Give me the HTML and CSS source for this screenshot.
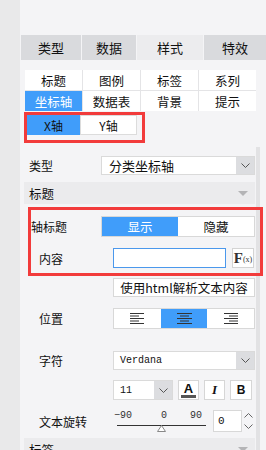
FILE: index.html
```html
<!DOCTYPE html>
<html lang="zh">
<head>
  <meta charset="UTF-8">
  <meta name="viewport" content="width=device-width, initial-scale=1.0">
  <title>样式设置</title>
  <link rel="stylesheet" href="styles.css">
</head>
<body>
  <div class="app">
    <div class="gutter"></div>
    <div class="panel">
      <div class="tabs">
        <div class="tab tab-w1">类型</div>
        <div class="tab tab-w2">数据</div>
        <div class="tab tab-w3 active">样式</div>
        <div class="tab tab-w4">特效</div>
      </div>

      <div class="subtabs">
        <div class="subtab">标题</div>
        <div class="subtab">图例</div>
        <div class="subtab">标签</div>
        <div class="subtab">系列</div>
        <div class="subtab active">坐标轴</div>
        <div class="subtab">数据表</div>
        <div class="subtab">背景</div>
        <div class="subtab">提示</div>
      </div>

      <div class="mark mark-axis">
        <div class="axis-switch">
          <div class="axis-btn axis-x active">X轴</div>
          <div class="axis-btn axis-y">Y轴</div>
        </div>
      </div>

      <div class="scroll">
        <div class="content">
          <div class="row row-type">
            <div class="label label-type">类型</div>
            <div class="select select-wide">
              <div class="select-value">分类坐标轴</div>
              <div class="select-arrow">
                <svg width="9" height="5" viewBox="0 0 9 5"><polyline points="0.5,0.5 4.5,4.5 8.5,0.5" fill="none" stroke="#555" stroke-width="1"/></svg>
              </div>
            </div>
          </div>

          <div class="section-head head-title">
            <span>标题</span>
            <span class="caret"></span>
          </div>

          <div class="mark mark-title">
            <div class="row row-show">
              <div class="label label-show">轴标题</div>
              <div class="toggle">
                <div class="toggle-item toggle-on">显示</div>
                <div class="toggle-item">隐藏</div>
              </div>
            </div>
            <div class="row row-content">
              <div class="label label-indent">内容</div>
              <div class="text-input"></div>
              <div class="fx-btn"><span class="fx-f">F</span><span class="fx-x">(x)</span></div>
            </div>
          </div>

          <div class="plain-btn html-btn">使用html解析文本内容</div>

          <div class="row row-align">
            <div class="label label-indent">位置</div>
            <div class="align-group">
              <div class="align-item">
                <svg width="15" height="11" viewBox="0 0 15 11"><g stroke="#333" stroke-width="1"><line x1="0" y1="0.5" x2="14" y2="0.5"/><line x1="0" y1="3" x2="9" y2="3"/><line x1="0" y1="5.5" x2="14" y2="5.5"/><line x1="0" y1="8" x2="9" y2="8"/><line x1="0" y1="10.5" x2="14" y2="10.5"/></g></svg>
              </div>
              <div class="align-item active">
                <svg width="15" height="11" viewBox="0 0 15 11"><g stroke="#333" stroke-width="1"><line x1="0" y1="0.5" x2="15" y2="0.5"/><line x1="3" y1="3" x2="12" y2="3"/><line x1="0" y1="5.5" x2="15" y2="5.5"/><line x1="3" y1="8" x2="12" y2="8"/><line x1="0" y1="10.5" x2="15" y2="10.5"/></g></svg>
              </div>
              <div class="align-item">
                <svg width="15" height="11" viewBox="0 0 15 11"><g stroke="#333" stroke-width="1"><line x1="1" y1="0.5" x2="15" y2="0.5"/><line x1="6" y1="3" x2="15" y2="3"/><line x1="1" y1="5.5" x2="15" y2="5.5"/><line x1="6" y1="8" x2="15" y2="8"/><line x1="1" y1="10.5" x2="15" y2="10.5"/></g></svg>
              </div>
            </div>
          </div>

          <div class="row row-font">
            <div class="label label-indent">字符</div>
            <div class="select select-font">
              <div class="select-value mono">Verdana</div>
              <div class="select-arrow">
                <svg width="9" height="5" viewBox="0 0 9 5"><polyline points="0.5,0.5 4.5,4.5 8.5,0.5" fill="none" stroke="#555" stroke-width="1"/></svg>
              </div>
            </div>
          </div>

          <div class="row row-size">
            <div class="select select-size">
              <div class="select-value mono">11</div>
              <div class="select-arrow">
                <svg width="9" height="5" viewBox="0 0 9 5"><polyline points="0.5,0.5 4.5,4.5 8.5,0.5" fill="none" stroke="#555" stroke-width="1"/></svg>
              </div>
            </div>
            <div class="icon-btn color-btn">
              <span class="color-a">A</span>
              <span class="color-bar"></span>
            </div>
            <div class="icon-btn italic-btn">I</div>
            <div class="icon-btn bold-btn">B</div>
          </div>

          <div class="row row-rotate">
            <div class="label label-indent">文本旋转</div>
            <div class="slider">
              <div class="scale">
                <span class="tick tick-min">−90</span>
                <span class="tick tick-mid">0</span>
                <span class="tick tick-max">90</span>
              </div>
              <div class="track"></div>
              <svg class="thumb" width="9" height="7" viewBox="0 0 9 7"><polygon points="4.5,0.5 8.5,6.5 0.5,6.5" fill="#fff" stroke="#888" stroke-width="1"/></svg>
            </div>
            <div class="number">
              <div class="number-value">0</div>
              <div class="spin">
                <svg width="9" height="5" viewBox="0 0 9 5"><polyline points="0.5,4.5 4.5,0.5 8.5,4.5" fill="none" stroke="#666" stroke-width="1"/></svg>
                <svg width="9" height="5" viewBox="0 0 9 5"><polyline points="0.5,0.5 4.5,4.5 8.5,0.5" fill="none" stroke="#666" stroke-width="1"/></svg>
              </div>
            </div>
          </div>

          <div class="section-head head-label">
            <span>标签</span>
            <span class="caret"></span>
          </div>
        </div>
        <div class="scrollbar"></div>
      </div>
    </div>
  </div>
</body>
</html>
```

FILE: styles.css
```css
body {
  margin: 0;
  font-family: "Noto Sans CJK SC", "Noto Sans", sans-serif;
  font-size: 12px;
  color: #111;
  background-color: #f4f4f6;
}
.app {
  display: flex;
  height: 450px;
  overflow: hidden;
}
.gutter {
  width: 20px;
  background-color: #e9e9ea;
}
.panel {
  flex: 1;
  display: flex;
  flex-direction: column;
  padding-top: 35px;
  background-color: #f4f4f6;
  min-width: 0;
}

/* top tabs */
.tabs {
  display: flex;
  gap: 1px;
  margin-left: 1px;
  height: 25px;
}
.tab {
  display: flex;
  align-items: center;
  justify-content: center;
  background-color: #d9dadd;
  font-size: 13px;
}
.tab.active {
  background-color: #ececee;
}
.tab-w1 { width: 60px; }
.tab-w2 { width: 54px; }
.tab-w3 { width: 66px; }
.tab-w4 { width: 62px; }

/* sub tabs */
.subtabs {
  display: grid;
  grid-template-columns: repeat(4, 57px);
  grid-auto-rows: 20px;
  gap: 1px;
  margin: 10px 0 0 5px;
  width: 231px;
  background-color: #e4e4e6;
}
.subtab {
  display: flex;
  align-items: center;
  justify-content: center;
  background-color: #fff;
  font-size: 12.5px;
}
.subtab.active {
  background-color: #409dfa;
  color: #fff;
}

/* red annotation frames */
.mark {
  border: 3px solid #f23b3b;
  box-sizing: border-box;
  position: relative;
}
.mark-axis {
  align-self: flex-start;
  margin: 1px 0 0 4px;
  padding: 0 5px 5px 0;
}
.axis-switch {
  display: flex;
}
.axis-btn {
  height: 20px;
  display: flex;
  align-items: center;
  justify-content: center;
  box-sizing: border-box;
}
.axis-x {
  width: 53px;
  background-color: #409dfa;
  color: #111;
}
.axis-y {
  width: 57px;
  background-color: #fff;
  border: 1px solid #dcdcdc;
}

/* scroll area */
.scroll {
  flex: 1;
  display: flex;
  margin-top: 4px;
  padding-left: 4px;
  min-height: 0;
}
.content {
  width: 231px;
}
.scrollbar {
  width: 4px;
  margin-left: 1px;
  background-color: #e2e2e4;
}

.row {
  display: flex;
  align-items: center;
}
.label {
  flex-shrink: 0;
}
.label-type {
  width: 72px;
  padding-left: 5px;
}
.label-show {
  width: 70px;
}
.label-indent {
  width: 74px;
  padding-left: 15px;
}
.row-type {
  margin-top: 9px;
  height: 19px;
}

.select {
  display: flex;
  height: 19px;
  box-sizing: border-box;
  background-color: #fff;
  border: 1px solid #dadada;
}
.select-value {
  flex: 1;
  display: flex;
  align-items: center;
  padding-left: 7px;
  font-size: 13px;
}
.select-arrow {
  width: 18px;
  display: flex;
  align-items: center;
  justify-content: center;
  background-color: #dcdde0;
}
.select-wide {
  width: 154px;
}
.mono {
  font-family: "Liberation Mono", "Noto Sans CJK SC", monospace;
  font-size: 10px;
  padding-left: 6px;
}

.section-head {
  display: flex;
  align-items: center;
  justify-content: space-between;
  height: 22px;
  padding: 0 7px 0 5px;
  background-color: #ebebed;
  font-size: 12.5px;
}
.head-title {
  margin-top: 7px;
}
.caret {
  width: 0;
  height: 0;
  border-left: 5px solid transparent;
  border-right: 5px solid transparent;
  border-top: 5px solid #b4b4b6;
}

.mark-title {
  margin: 3px -8px 0 4px;
  padding: 6px 5px 5px 0;
}
.row-show {
  height: 21px;
}
.toggle {
  display: flex;
  width: 154px;
  height: 21px;
  box-sizing: border-box;
  border: 1px solid #d8d8d8;
  background-color: #fff;
}
.toggle-item {
  flex: 1;
  display: flex;
  align-items: center;
  justify-content: center;
  font-size: 12.5px;
}
.toggle-on {
  background-color: #409dfa;
  color: #fff;
}
.row-content {
  margin-top: 11px;
  height: 20px;
}
.row-content .label-indent {
  padding-left: 8px;
}
.text-input {
  width: 113px;
  height: 20px;
  box-sizing: border-box;
  background-color: #fff;
  border: 1px solid #4b98ec;
}
.fx-btn {
  width: 22px;
  height: 20px;
  margin-left: 6px;
  box-sizing: border-box;
  border: 1px solid #d4d4d4;
  background-color: #fff;
  display: flex;
  align-items: center;
  justify-content: center;
  color: #333;
}
.fx-f {
  font-family: "Liberation Serif", serif;
  font-weight: bold;
  font-size: 15px;
  line-height: 1;
}
.fx-x {
  font-family: "Liberation Serif", serif;
  font-size: 8px;
  line-height: 1;
  margin-top: 4px;
}

.plain-btn {
  display: flex;
  align-items: center;
  justify-content: center;
  background-color: #fff;
  border: 1px solid #d8d8d8;
  box-sizing: border-box;
}
.html-btn {
  margin: 2px 0 0 89px;
  width: 142px;
  height: 19px;
  font-size: 12.5px;
}

.row-align {
  margin-top: 11px;
  height: 21px;
}
.align-group {
  display: flex;
  width: 142px;
  height: 21px;
  box-sizing: border-box;
  border: 1px solid #d8d8d8;
  background-color: #fff;
}
.align-item {
  flex: 1;
  display: flex;
  align-items: center;
  justify-content: center;
}
.align-item.active {
  background-color: #409dfa;
}

.row-font {
  margin-top: 22px;
  height: 19px;
}
.select-font {
  width: 142px;
}

.row-size {
  margin: 10px 0 0 89px;
  height: 20px;
  gap: 5px;
}
.select-size {
  width: 60px;
  height: 20px;
}
.icon-btn {
  width: 21px;
  height: 20px;
  box-sizing: border-box;
  border: 1px solid #d6d6d6;
  background-color: #fff;
  display: flex;
  align-items: center;
  justify-content: center;
}
.color-btn {
  flex-direction: column;
}
.color-a {
  font-family: "Liberation Sans", sans-serif;
  font-weight: bold;
  font-size: 13px;
  line-height: 11px;
}
.color-bar {
  width: 15px;
  height: 3px;
  margin-top: 1px;
  background-color: #555;
}
.italic-btn {
  font-family: "Liberation Serif", serif;
  font-style: italic;
  font-weight: bold;
  font-size: 13px;
}
.bold-btn {
  width: 22px;
  font-family: "Liberation Sans", sans-serif;
  font-weight: bold;
  font-size: 12px;
}

.row-rotate {
  margin-top: 10px;
  height: 22px;
}
.slider {
  position: relative;
  width: 97px;
  height: 22px;
}
.scale {
  display: flex;
  font-family: "Liberation Mono", monospace;
  font-size: 10px;
  line-height: 10px;
  color: #333;
  margin-top: 1px;
}
.tick-min {
  margin-left: 1px;
}
.tick-mid {
  margin-left: 29px;
}
.tick-max {
  margin-left: 23px;
}
.track {
  height: 1px;
  margin: 4px 4px 0 4px;
  background-color: #333;
}
.thumb {
  position: absolute;
  left: 44px;
  top: 15px;
}
.number {
  display: flex;
  margin-left: 3px;
  height: 22px;
}
.number-value {
  width: 29px;
  box-sizing: border-box;
  border: 1px solid #d8d8d8;
  background-color: #fff;
  display: flex;
  align-items: center;
  padding-left: 4px;
  font-family: "Liberation Mono", monospace;
  font-size: 11px;
}
.spin {
  width: 13px;
  display: flex;
  flex-direction: column;
  justify-content: space-around;
  align-items: center;
}

.head-label {
  margin-top: 6px;
}
```
